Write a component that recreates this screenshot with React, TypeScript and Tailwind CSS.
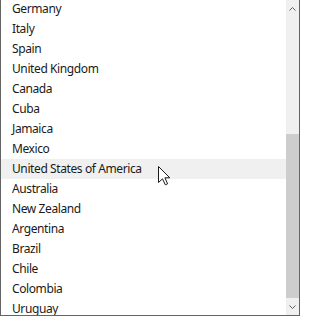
const countries = [
  "Germany",
  "Italy",
  "Spain",
  "United Kingdom",
  "Canada",
  "Cuba",
  "Jamaica",
  "Mexico",
  "United States of America",
  "Australia",
  "New Zealand",
  "Argentina",
  "Brazil",
  "Chile",
  "Colombia",
  "Uruguay",
];

const hovered = "United States of America";

export default function App() {
  return (
    <div className="h-[318px] w-[302px] overflow-hidden bg-white">
      <div className="relative -mt-px flex h-[317px] w-[300px] border border-[#646464] bg-white">
        {/* list */}
        <div className="flex-1 overflow-hidden">
          <ul className="-mt-[1px] font-['Noto_Sans',sans-serif] text-[12px] tracking-[-0.4px] text-[#1a1a1a]">
            {countries.map((c) => (
              <li
                key={c}
                className={`flex h-[20px] items-center pl-[11px] ${c === hovered ? "bg-[#f0f0f0]" : ""}`}
              >
                {c}
              </li>
            ))}
          </ul>
        </div>

        {/* scrollbar */}
        <div className="flex w-[13px] flex-col bg-[#f0f0f0]">
          <div className="flex h-[17px] items-center justify-center">
            <svg width="7" height="4" viewBox="0 0 7 4">
              <path d="M0.5 3.5 L3.5 0.5 L6.5 3.5" fill="none" stroke="#606060" strokeWidth="1" />
            </svg>
          </div>
          <div className="flex-1 pt-[117px]">
            <div className="h-full bg-[#cdcdcd]" />
          </div>
          <div className="flex h-[17px] items-center justify-center">
            <svg width="7" height="4" viewBox="0 0 7 4">
              <path d="M0.5 0.5 L3.5 3.5 L6.5 0.5" fill="none" stroke="#606060" strokeWidth="1" />
            </svg>
          </div>
        </div>

        {/* mouse pointer */}
        <svg
          className="absolute left-[157px] top-[166px]"
          width="13"
          height="20"
          viewBox="0 0 13 20"
        >
          <path
            d="M0.5 0.5 L0.5 16.5 L4.5 12.8 L7.3 18.8 L9.6 17.8 L6.9 11.8 L11.8 11.8 Z"
            fill="#ffffff"
            stroke="#1a1a1a"
            strokeWidth="1"
            strokeLinejoin="miter"
          />
        </svg>
      </div>
    </div>
  );
}
